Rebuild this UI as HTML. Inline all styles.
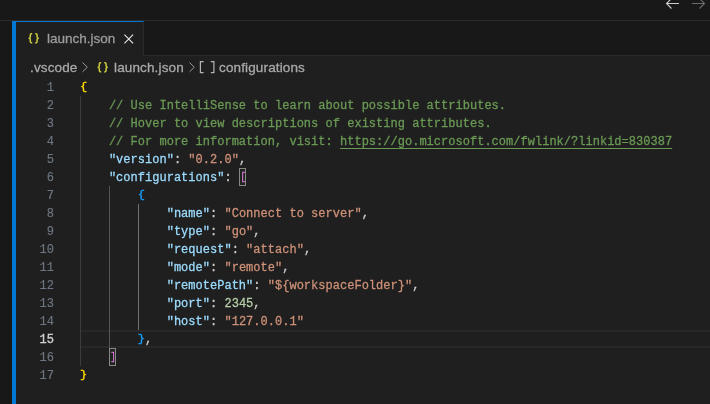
<!DOCTYPE html>
<html><head><meta charset="utf-8">
<style>
html,body{margin:0;padding:0;}
body{width:710px;height:404px;overflow:hidden;background:#1f1f1f;position:relative;font-family:"Liberation Sans",sans-serif;}
.abs{position:absolute;}
#top{left:0;top:0;width:710px;height:20px;background:#181818;}
#topline{left:0;top:20px;width:710px;height:1px;background:#2b2b2b;}
#tabs{left:0;top:21px;width:710px;height:34px;background:#181818;}
#tabsline{left:0;top:55px;width:710px;height:1px;background:#2b2b2b;}
#left{left:0;top:21px;width:12px;height:383px;background:#181818;}
#blue{left:12px;top:21px;width:4px;height:383px;background:#0078d4;}
#tab{left:16px;top:21px;width:128px;height:35px;background:#1f1f1f;border-top:1px solid #0078d4;border-right:1px solid #2b2b2b;box-sizing:border-box;}
.t13{will-change:transform;-webkit-text-stroke:0.3px currentColor;font-size:13.5px;letter-spacing:0px;line-height:16px;white-space:pre;}
#code{left:0;top:78px;font-family:"Liberation Mono",monospace;font-size:12px;line-height:18px;white-space:pre;color:#cccccc;letter-spacing:0.02px;}
.ln{-webkit-text-stroke:0.15px currentColor;position:absolute;left:0;width:54px;text-align:right;color:#6e7681;font-family:"Liberation Mono",monospace;font-size:12px;line-height:18px;}
.cl{-webkit-text-stroke:0.28px currentColor;position:absolute;left:80px;font-family:"Liberation Mono",monospace;font-size:12px;line-height:18px;white-space:pre;color:#cccccc;letter-spacing:0.02px;}
.c{color:#6a9955}.k{color:#9cdcfe}.s{color:#ce9178}.n{color:#b5cea8}.b1{color:#ffd700}.b2{color:#da70d6}.b3{color:#179fff}
.b1,.b2,.b3{display:inline-block;transform:translateY(-1.2px) scaleY(0.92);-webkit-text-stroke:0.4px currentColor;}
.b2{transform:translate(0.5px,-1.3px) scale(0.72,0.95);-webkit-text-stroke:0.5px currentColor;}
.u{text-decoration:underline;text-decoration-thickness:1px;text-underline-offset:3px;}
.guide{position:absolute;width:1px;background:#404040;}
</style></head><body>
<div class="abs" id="top"></div>
<div class="abs" id="topline"></div>
<div class="abs" id="tabs"></div>
<div class="abs" id="tabsline"></div>
<div class="abs" id="left"></div>
<div class="abs" id="blue"></div>
<div class="abs" id="tab"></div>
<svg class="abs" style="left:660px;top:0" width="50" height="12" viewBox="0 0 50 12" fill="none" stroke-width="1.1">
<path d="M19 3.5 H6.8 M11.5 -1.5 L6.5 3.5 L11.5 8.5" stroke="#cccccc"/>
<path d="M32 3.5 H44.2 M39.5 -1.5 L44.5 3.5 L39.5 8.5" stroke="#6b6b6b"/>
</svg>
<svg class="abs" style="left:28px;top:33px" width="12" height="11" viewBox="0 0 12 11" fill="none" stroke="#cbcb41" stroke-width="1.5"><path d="M4.2 0.6 C2.6 0.6 2.3 1.1 2.3 2.3 V4 C2.3 4.9 1.7 5.3 0.6 5.3 C1.7 5.3 2.3 5.7 2.3 6.6 V8.3 C2.3 9.5 2.6 10 4.2 10"/><path d="M7.2 0.6 C8.8 0.6 9.1 1.1 9.1 2.3 V4 C9.1 4.9 9.7 5.3 10.8 5.3 C9.7 5.3 9.1 5.7 9.1 6.6 V8.3 C9.1 9.5 8.8 10 7.2 10"/></svg>
<div class="abs t13" style="left:46.5px;top:30.5px;color:#9d9d9d;">launch.json</div>
<svg class="abs" style="left:122px;top:32px" width="14" height="14" viewBox="0 0 14 14" fill="none" stroke="#e8e8e8" stroke-width="1.1"><path d="M2.4 2.7 L11.1 11.3 M11.1 2.7 L2.4 11.3"/></svg>

<div class="abs t13" style="left:30px;top:59.5px;color:#a9a9a9;letter-spacing:0.14px">.vscode</div>
<svg class="abs" style="left:80px;top:60.8px" width="10" height="12" viewBox="0 0 10 12" fill="none" stroke="#999999" stroke-width="1"><path d="M2.5 1.5 L7.3 6.2 L2.5 10.9"/></svg>
<svg class="abs" style="left:96.7px;top:62px" width="12" height="11" viewBox="0 0 12 11" fill="none" stroke="#cbcb41" stroke-width="1.5"><path d="M4.2 0.6 C2.6 0.6 2.3 1.1 2.3 2.3 V4 C2.3 4.9 1.7 5.3 0.6 5.3 C1.7 5.3 2.3 5.7 2.3 6.6 V8.3 C2.3 9.5 2.6 10 4.2 10"/><path d="M7.2 0.6 C8.8 0.6 9.1 1.1 9.1 2.3 V4 C9.1 4.9 9.7 5.3 10.8 5.3 C9.7 5.3 9.1 5.7 9.1 6.6 V8.3 C9.1 9.5 8.8 10 7.2 10"/></svg>
<div class="abs t13" style="left:114px;top:59.5px;color:#a9a9a9;letter-spacing:0.14px">launch.json</div>
<svg class="abs" style="left:186.6px;top:60.8px" width="10" height="12" viewBox="0 0 10 12" fill="none" stroke="#999999" stroke-width="1"><path d="M2.5 1.5 L7.3 6.2 L2.5 10.9"/></svg>
<svg class="abs" style="left:199px;top:60px" width="18" height="15" viewBox="0 0 18 15" fill="none" stroke="#b4b4b4" stroke-width="1.2"><path d="M4.6 1.7 H1.4 V12.6 H4.6 M11.8 1.7 H14.9 V12.6 H11.8"/></svg>
<div class="abs t13" style="left:219px;top:59.5px;color:#a9a9a9;letter-spacing:0.14px">configurations</div>

<div class="abs" style="left:80px;top:330px;width:630px;height:18px;box-sizing:border-box;border-top:2px solid #282828;border-bottom:2px solid #282828;"></div>
<div class="guide" style="left:80px;top:96px;height:270px;background:#3c3c3c"></div>
<div class="guide" style="left:109px;top:186px;height:162px;background:#555555"></div>
<div class="guide" style="left:138px;top:204px;height:126px;background:#707070"></div>
<div class="abs" style="left:239px;top:168px;width:7px;height:18px;box-sizing:border-box;border:1px solid #888888;background:#1d261d"></div>
<div class="abs" style="left:109px;top:348px;width:7px;height:18px;box-sizing:border-box;border:1px solid #888888;background:#1d261d"></div>
<div id="lines" style="will-change:transform">
<div class="ln" style="top:79px">1</div><div class="cl" style="top:79px"><span class="b1">{</span></div>
<div class="ln" style="top:97px">2</div><div class="cl" style="top:97px">    <span class="c">// Use IntelliSense to learn about possible attributes.</span></div>
<div class="ln" style="top:115px">3</div><div class="cl" style="top:115px">    <span class="c">// Hover to view descriptions of existing attributes.</span></div>
<div class="ln" style="top:133px">4</div><div class="cl" style="top:133px">    <span class="c">// For more information, visit: <span class="u">https://go.microsoft.com/fwlink/?linkid=830387</span></span></div>
<div class="ln" style="top:151px">5</div><div class="cl" style="top:151px">    <span class="k">"version"</span>: <span class="s">"0.2.0"</span>,</div>
<div class="ln" style="top:169px">6</div><div class="cl" style="top:169px">    <span class="k">"configurations"</span>: <span class="b2">[</span></div>
<div class="ln" style="top:187px">7</div><div class="cl" style="top:187px">        <span class="b3">{</span></div>
<div class="ln" style="top:205px">8</div><div class="cl" style="top:205px">            <span class="k">"name"</span>: <span class="s">"Connect to server"</span>,</div>
<div class="ln" style="top:223px">9</div><div class="cl" style="top:223px">            <span class="k">"type"</span>: <span class="s">"go"</span>,</div>
<div class="ln" style="top:241px">10</div><div class="cl" style="top:241px">            <span class="k">"request"</span>: <span class="s">"attach"</span>,</div>
<div class="ln" style="top:259px">11</div><div class="cl" style="top:259px">            <span class="k">"mode"</span>: <span class="s">"remote"</span>,</div>
<div class="ln" style="top:277px">12</div><div class="cl" style="top:277px">            <span class="k">"remotePath"</span>: <span class="s">"${workspaceFolder}"</span>,</div>
<div class="ln" style="top:295px">13</div><div class="cl" style="top:295px">            <span class="k">"port"</span>: <span class="n">2345</span>,</div>
<div class="ln" style="top:313px">14</div><div class="cl" style="top:313px">            <span class="k">"host"</span>: <span class="s">"127.0.0.1"</span></div>
<div class="ln" style="top:331px;color:#d0d0d0;-webkit-text-stroke:0.35px #d0d0d0">15</div><div class="cl" style="top:331px">        <span class="b3">}</span>,</div>
<div class="ln" style="top:349px">16</div><div class="cl" style="top:349px">    <span class="b2">]</span></div>
<div class="ln" style="top:367px">17</div><div class="cl" style="top:367px"><span class="b1">}</span></div>
</div>
</body></html>
